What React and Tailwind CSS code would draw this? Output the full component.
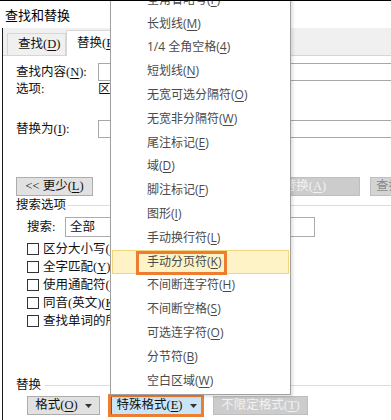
import React from "react";

const menuItems = [
  ["全角省略号", "F"],
  ["长划线", "M"],
  ["1/4 全角空格", "4"],
  ["短划线", "N"],
  ["无宽可选分隔符", "O"],
  ["无宽非分隔符", "W"],
  ["尾注标记", "E"],
  ["域", "D"],
  ["脚注标记", "F"],
  ["图形", "I"],
  ["手动换行符", "L"],
  ["手动分页符", "K"],
  ["不间断连字符", "H"],
  ["不间断空格", "S"],
  ["可选连字符", "O"],
  ["分节符", "B"],
  ["空白区域", "W"],
];

const checks = [
  ["区分大小写", "H"],
  ["全字匹配", "Y"],
  ["使用通配符", "U"],
  ["同音(英文)", "K"],
  ["查找单词的所有形式(英文)", "W"],
];

function Key({ text, k }) {
  return (
    <span className="whitespace-nowrap">
      {text}(<span className="underline underline-offset-2">{k}</span>)
    </span>
  );
}

function Caret() {
  return (
    <svg width="7" height="4" viewBox="0 0 7 4" className="ml-[7px] shrink-0">
      <path d="M0 0h7L3.5 4z" fill="#333" />
    </svg>
  );
}

function SpecialMenu() {
  return (
    <div className="absolute left-[110px] top-[-15px] w-[181px] bg-white border border-[#a0a0a0] py-[1px] shadow-[2px_2px_3px_rgba(0,0,0,0.12)] font-['Open_Sans','Noto_Sans_CJK_SC',sans-serif] text-[12px] text-[#4a4a4a] z-10">
      {menuItems.map(([t, k], i) =>
        i === 11 ? (
          <div
            key={i}
            className="relative h-[23.8px] mx-[1px] flex items-center pl-[34px] bg-[#fdf3c6] border border-[#f1d67e]"
          >
            <Key text={t} k={k} />
            <span className="absolute left-[23px] top-0 w-[91px] h-[24px] border-[3px] border-[#ed7d31]" />
          </div>
        ) : (
          <div key={i} className="h-[23.8px] flex items-center pl-[36px]">
            <Key text={t} k={k} />
          </div>
        )
      )}
    </div>
  );
}

export default function App() {
  return (
    <div className="relative w-[391px] h-[420px] overflow-hidden bg-white border-t border-black text-[12.5px] text-[#111] font-['Liberation_Serif','Noto_Sans_CJK_SC',serif]">
      {/* title */}
      <div className="h-[27px] pl-[5px] flex items-center text-[13px] text-black font-['Noto_Sans_CJK_SC',sans-serif]">
        查找和替换
      </div>

      <div className="ml-[2px] border-l border-[#1a1a1a] h-[392px] flex flex-col">
        {/* tabs */}
        <div className="h-[27px] shrink-0 bg-[#f0f0f0] flex items-end pl-[4px]">
          <div className="h-[22px] w-[59px] border border-b-0 border-[#d6d6d6] bg-[#f0f0f0] flex items-center pl-[10px]">
            <Key text="查找" k="D" />
          </div>
          <div className="relative z-[1] -mb-px h-[26px] w-[80px] bg-white border border-b-0 border-[#d6d6d6] flex items-center pl-[10px]">
            <Key text="替换" k="P" />
          </div>
        </div>

        {/* panel */}
        <div className="flex-1 border-t border-[#d6d6d6] flex flex-col pl-[13px]">
          <div className="mt-[7px] h-[18px] flex items-center shrink-0">
            <span className="w-[82px] shrink-0">
              查找内容(<span className="underline underline-offset-2">N</span>):
            </span>
            <div className="w-[320px] h-[18px] shrink-0 border border-[#a8a8a8]" />
          </div>
          <div className="h-[16px] flex items-center shrink-0">
            <span className="w-[82px] shrink-0">选项:</span>
            <span className="whitespace-nowrap">区分全/半角</span>
          </div>

          <div className="mt-[23px] h-[18px] flex items-center shrink-0">
            <span className="w-[82px] shrink-0">
              替换为(<span className="underline underline-offset-2">I</span>):
            </span>
            <div className="w-[320px] h-[18px] shrink-0 border border-[#a8a8a8]" />
          </div>

          <div className="mt-[39px] h-[19px] flex shrink-0">
            <button className="w-[77px] h-[19px] shrink-0 bg-[#e1e1e1] border border-[#adadad] flex items-center justify-center">
              {"<< "}更少(<span className="underline underline-offset-2">L</span>)
            </button>
            <button className="ml-[132px] w-[135px] h-[19px] shrink-0 bg-[#cccccc] border border-[#bfbfbf] text-[#f2f2f2] flex items-center justify-center">
              <Key text="全部替换" k="A" />
            </button>
            <button className="ml-[10px] w-[90px] h-[19px] shrink-0 bg-[#d4d4d4] border border-[#bfbfbf] text-[#8a8a8a] flex items-center justify-center">
              <Key text="查找下一处" k="F" />
            </button>
          </div>

          <div className="mt-[1px] h-[16px] flex items-center shrink-0">
            <span>搜索选项</span>
            <div className="ml-[2px] flex-1 h-px bg-[#dcdcdc]" />
          </div>

          <div className="mt-[4px] h-[20px] flex items-center pl-[11px] shrink-0">
            <span className="w-[38px] shrink-0">搜索:</span>
            <div className="w-[250px] h-[20px] shrink-0 border border-[#acacac] flex items-center pl-[4px]">
              全部
            </div>
          </div>

          <div className="mt-[3px] flex flex-col pl-[11px] shrink-0">
            {checks.map(([t, k]) => (
              <div key={t} className="h-[18px] flex items-center">
                <span className="w-[12px] h-[12px] shrink-0 border border-[#333] bg-white mr-[4px]" />
                <Key text={t} k={k} />
              </div>
            ))}
          </div>

          <div className="mt-[47px] h-[16px] flex items-center shrink-0">
            <span>替换</span>
            <div className="ml-[4px] flex-1 h-px bg-[#dcdcdc]" />
          </div>

          <div className="mt-[1px] h-[23px] flex items-center pl-[11px] shrink-0">
            <button className="w-[73px] h-[19px] shrink-0 bg-[#e1e1e1] border border-[#adadad] flex items-center justify-center">
              <Key text="格式" k="O" />
              <Caret />
            </button>
            <div className="ml-[8px] w-[96px] h-[23px] shrink-0 border-[3px] border-[#ed7d31]">
              <button className="w-full h-full bg-[#cce4f7] border-l border-[#0078d7] flex items-center justify-center">
                <Key text="特殊格式" k="E" />
                <Caret />
              </button>
            </div>
            <button className="ml-[9px] w-[95px] h-[19px] shrink-0 bg-[#cccccc] border border-[#bfbfbf] text-[#f2f2f2] flex items-center justify-center">
              <Key text="不限定格式" k="T" />
            </button>
          </div>
        </div>
      </div>

      <SpecialMenu />
    </div>
  );
}
